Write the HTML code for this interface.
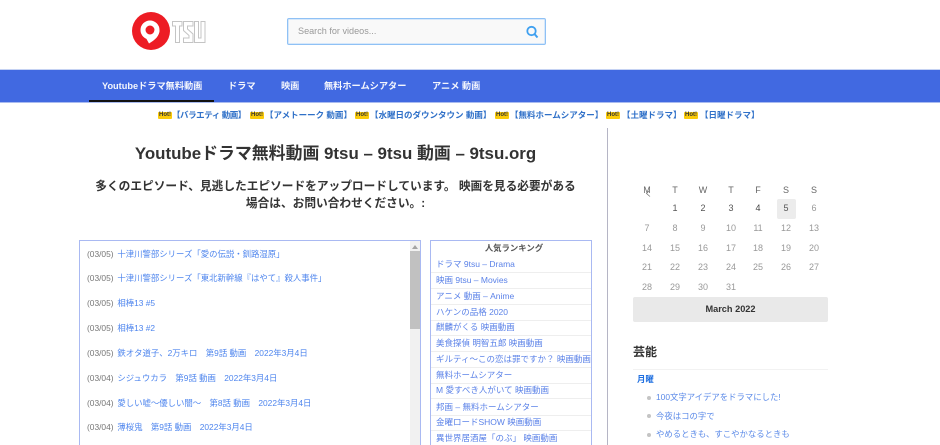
<!DOCTYPE html>
<html lang="ja">
<head>
<meta charset="utf-8">
<title>Youtubeドラマ無料動画 9tsu</title>
<style>
html,body{margin:0;padding:0;background:#fff;width:940px;height:445px;overflow:hidden}
#page{width:940px;height:445px;overflow:hidden;position:relative;font-family:"Liberation Sans","Noto Sans CJK JP",sans-serif;color:#333;background:#fff;filter:blur(.35px)}
.a{position:absolute;white-space:nowrap}
#nav{left:0;top:70px;width:940px;height:32px;background:#4169e1;box-shadow:0 -1px 0 #c5d2f3,0 1px 0 #a9bbf0}
.n{top:79px;font-size:9.2px;line-height:14px;font-weight:bold;color:#f4f6fd}
#hot{left:0;top:109px;width:940px;height:14px}
.h{position:absolute;top:3px;width:14px;height:7px;background:#fbcb0a;border-radius:1px;color:#333;font-size:6px;line-height:7px;font-weight:bold;text-align:center}
.t{position:absolute;top:0;font-size:8.5px;line-height:13px;font-weight:bold;color:#2f70c8;white-space:nowrap}
#list{left:79px;top:240px;width:340px;height:220px;border:1px solid #a9b9f2;background:#fff}
.li{position:absolute;left:7px;font-size:8.4px;line-height:12px;white-space:nowrap;color:#4f86ee}
.li span{color:#777;margin-right:1.5px}
#rank{left:430px;top:240px;width:160px;height:220px;border:1px solid #a9b9f2;background:#fff}
.r{position:absolute;left:0;width:160px;height:16px;font-size:8.5px;line-height:15px;color:#5b82e8;padding-left:5px;box-sizing:border-box;white-space:nowrap;overflow:hidden;border-bottom:1px solid #eee}
.c{position:absolute;width:20px;text-align:center;font-size:9px;line-height:12px;color:#999}
.d{color:#666}
.s{position:absolute;left:656px;font-size:8.4px;line-height:13px;color:#5b8ae8;white-space:nowrap}
.b{position:absolute;left:647px;width:4px;height:4px;border-radius:50%;background:#c4c4c4}
</style>
</head>
<body>
<div id="page">
<svg class="a" style="left:130px;top:11px" width="78" height="40" viewBox="0 0 78 40">
<circle cx="21" cy="20" r="19" fill="#ed1c24"/>
<circle cx="20" cy="19" r="7" fill="none" stroke="#fff" stroke-width="5"/>
<path d="M29.5 19 C29.5 25 25 29 19 32.5 L16.5 28 C21 26.5 24 23.5 24.5 19Z" fill="#fff"/>
<g fill="#fff" stroke="#c4c4c4" stroke-width="1">
<path d="M42.500 10.500H52V15H49.500V31.500H45.500V15H42.500Z"/>
<path d="M53.500 10.500H63V15H57.500V18L63 23V31.500H53.500V27H59V24.500L53.500 19.500Z"/>
<path d="M64.500 10.500H68.500V27H71V10.500H75V31.500H64.500Z"/>
</g>
</svg>

<div class="a" style="left:287px;top:18px;width:259px;height:27px;box-sizing:border-box;border:1px solid #8fc1f5;box-shadow:inset 0 0 0 .5px #b5d8fa;border-radius:2px;background:#f9f9f9"></div>
<div class="a" style="left:298px;top:25px;font-size:9.1px;line-height:13px;color:#999">Search for videos...</div>
<svg class="a" style="left:525px;top:25px" width="14" height="14" viewBox="0 0 14 14"><circle cx="6.500" cy="6" r="4.200" fill="none" stroke="#3fa0f0" stroke-width="1.800"/><path d="M9.500 9L12.500 12.500" stroke="#3fa0f0" stroke-width="2"/></svg>

<div class="a" id="nav"></div>
<div class="a" style="left:89px;top:100px;width:125px;height:2px;background:#111"></div>
<div class="a n" style="left:102px">Youtubeドラマ無料動画</div>
<div class="a n" style="left:228px">ドラマ</div>
<div class="a n" style="left:281px">映画</div>
<div class="a n" style="left:324px">無料ホームシアター</div>
<div class="a n" style="left:432px">アニメ 動画</div>

<div class="a" id="hot">
<div class="h" style="left:158px">Hot!</div><div class="t" style="left:172px;letter-spacing:-.45px">【バラエティ 動画】</div>
<div class="h" style="left:250px">Hot!</div><div class="t" style="left:265px">【アメトーーク 動画】</div>
<div class="h" style="left:355px">Hot!</div><div class="t" style="left:370px">【水曜日のダウンタウン 動画】</div>
<div class="h" style="left:495px">Hot!</div><div class="t" style="left:510px">【無料ホームシアター】</div>
<div class="h" style="left:606px">Hot!</div><div class="t" style="left:622px">【土曜ドラマ】</div>
<div class="h" style="left:684px">Hot!</div><div class="t" style="left:700px">【日曜ドラマ】</div>
</div>

<div class="a" style="left:607px;top:128px;width:1px;height:317px;background:#b5b5c5"></div>

<div class="a" style="left:80px;width:511px;top:143px;text-align:center;font-size:16.9px;line-height:22px;font-weight:bold;color:#333">Youtubeドラマ無料動画 9tsu – 9tsu 動画 – 9tsu.org</div>
<div class="a" style="left:80px;width:511px;top:178px;text-align:center;font-size:11.7px;line-height:17px;font-weight:bold;color:#333">多くのエピソード、見逃したエピソードをアップロードしています。 映画を見る必要がある<br>場合は、お問い合わせください。:</div>

<div class="a" id="list">
<div class="li" style="top:7px"><span>(03/05)</span> 十津川警部シリーズ「愛の伝説・釧路湿原」</div>
<div class="li" style="top:31px"><span>(03/05)</span> 十津川警部シリーズ「東北新幹線『はやて』殺人事件」</div>
<div class="li" style="top:56px"><span>(03/05)</span> 相棒13 #5</div>
<div class="li" style="top:81px"><span>(03/05)</span> 相棒13 #2</div>
<div class="li" style="top:106px"><span>(03/05)</span> 鉄オタ道子、2万キロ　第9話 動画　2022年3月4日</div>
<div class="li" style="top:131px"><span>(03/04)</span> シジュウカラ　第9話 動画　2022年3月4日</div>
<div class="li" style="top:156px"><span>(03/04)</span> 愛しい嘘～優しい闇～　第8話 動画　2022年3月4日</div>
<div class="li" style="top:180px"><span>(03/04)</span> 薄桜鬼　第9話 動画　2022年3月4日</div>
<div style="position:absolute;left:330px;top:0;width:10px;height:220px;background:#f1f1f1"></div>
<div style="position:absolute;left:330px;top:10px;width:10px;height:78px;background:#c1c1c1"></div>
<svg style="position:absolute;left:332px;top:4px" width="6" height="4"><path d="M3 0L6 4H0Z" fill="#a3a3a3"/></svg>
</div>

<div class="a" id="rank">
<div style="position:absolute;left:3px;width:160px;top:1px;text-align:center;font-size:8.4px;line-height:12px;font-weight:bold;color:#555">人気ランキング</div>
<div class="r" style="top:16px">ドラマ 9tsu – Drama</div>
<div class="r" style="top:32px">映画 9tsu – Movies</div>
<div class="r" style="top:48px">アニメ 動画 – Anime</div>
<div class="r" style="top:64px">ハケンの品格 2020</div>
<div class="r" style="top:79px">麒麟がくる 映画動画</div>
<div class="r" style="top:95px">美食探偵 明智五郎 映画動画</div>
<div class="r" style="top:111px">ギルティ～この恋は罪ですか？ 映画動画</div>
<div class="r" style="top:127px">無料ホームシアター</div>
<div class="r" style="top:142px">M 愛すべき人がいて 映画動画</div>
<div class="r" style="top:159px">邦画 – 無料ホームシアター</div>
<div class="r" style="top:174px">金曜ロードSHOW 映画動画</div>
<div class="r" style="top:190px">異世界居酒屋「のぶ」 映画動画</div>
</div>

<div class="a" style="left:777px;top:199px;width:19px;height:20px;background:#ececec;border-radius:2px"></div>
<div class="c d" style="left:637px;top:184px">M</div><div class="c d" style="left:665px;top:184px">T</div><div class="c d" style="left:693px;top:184px">W</div><div class="c d" style="left:721px;top:184px">T</div><div class="c d" style="left:748px;top:184px">F</div><div class="c d" style="left:776px;top:184px">S</div><div class="c d" style="left:804px;top:184px">S</div>
<svg class="a" style="left:645px;top:190px" width="7" height="8"><path d="M4 1L1.500 3.500L5 6.500" fill="none" stroke="#777" stroke-width=".8"/></svg>
<div class="c" style="left:665px;top:202px;color:#555">1</div><div class="c" style="left:693px;top:202px;color:#555">2</div><div class="c" style="left:721px;top:202px;color:#555">3</div><div class="c" style="left:748px;top:202px;color:#444">4</div><div class="c" style="left:776px;top:202px;color:#555">5</div><div class="c" style="left:804px;top:202px">6</div>
<div class="c" style="left:637px;top:222px">7</div><div class="c" style="left:665px;top:222px">8</div><div class="c" style="left:693px;top:222px">9</div><div class="c" style="left:721px;top:222px">10</div><div class="c" style="left:748px;top:222px">11</div><div class="c" style="left:776px;top:222px">12</div><div class="c" style="left:804px;top:222px">13</div>
<div class="c" style="left:637px;top:242px">14</div><div class="c" style="left:665px;top:242px">15</div><div class="c" style="left:693px;top:242px">16</div><div class="c" style="left:721px;top:242px">17</div><div class="c" style="left:748px;top:242px">18</div><div class="c" style="left:776px;top:242px">19</div><div class="c" style="left:804px;top:242px">20</div>
<div class="c" style="left:637px;top:261px">21</div><div class="c" style="left:665px;top:261px">22</div><div class="c" style="left:693px;top:261px">23</div><div class="c" style="left:721px;top:261px">24</div><div class="c" style="left:748px;top:261px">25</div><div class="c" style="left:776px;top:261px">26</div><div class="c" style="left:804px;top:261px">27</div>
<div class="c" style="left:637px;top:281px">28</div><div class="c" style="left:665px;top:281px">29</div><div class="c" style="left:693px;top:281px">30</div><div class="c" style="left:721px;top:281px">31</div>
<div class="a" style="left:633px;top:297px;width:195px;height:25px;background:#e9e9e9;border-radius:2px;text-align:center;font-size:9.2px;line-height:25px;font-weight:bold;color:#333">March 2022</div>

<div class="a" style="left:633px;top:344px;font-size:12px;line-height:17px;font-weight:bold;color:#333">芸能</div>
<div class="a" style="left:633px;top:369px;width:195px;height:1px;background:#f2f2f2"></div>
<div class="a" style="left:637px;top:373px;font-size:8.4px;line-height:13px;font-weight:bold;color:#1f6fe0">月曜</div>
<div class="b" style="top:396px"></div><div class="s" style="top:391px">100文字アイデアをドラマにした!</div>
<div class="b" style="top:414px"></div><div class="s" style="top:410px">今夜はコの字で</div>
<div class="b" style="top:433px"></div><div class="s" style="top:428px">やめるときも、すこやかなるときも</div>
</div>
</body>
</html>
